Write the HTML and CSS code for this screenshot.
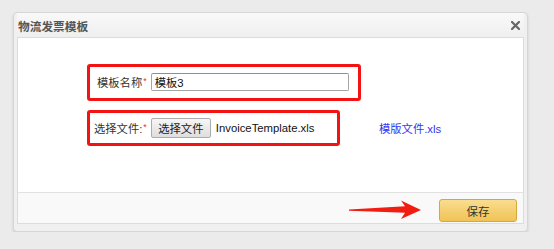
FILE: index.html
```html
<!DOCTYPE html>
<html lang="zh-CN">
<head>
    <meta charset="UTF-8">
    <title>物流发票模板</title>
    <link rel="stylesheet" href="styles.css">
</head>
<body>
    <div class="dialog">
        <div class="dialog-title">
            <span>物流发票模板</span>
            <svg class="close" width="9" height="9" viewBox="0 0 9 9">
                <path d="M1 1 L8 8 M8 1 L1 8" stroke="#666" stroke-width="2.2" stroke-linecap="square"/>
            </svg>
        </div>
        <div class="dialog-panel">
            <div class="dialog-body">
                <!-- template name -->
                <div class="row">
                    <div class="mark mark-name">
                        <label class="field-label">模板名称<em>*</em></label>
                        <input class="text-input" type="text" value="模板3">
                    </div>
                </div>

                <!-- template file -->
                <div class="row row-file">
                    <div class="mark mark-file">
                        <label class="field-label">选择文件:<em>*</em></label>
                        <span class="file-btn">选择文件</span>
                        <span class="file-name">InvoiceTemplate.xls</span>
                    </div>
                    <a class="sample-link" href="#">模版文件.xls</a>
                </div>
            </div>
            <div class="dialog-footer">
                <svg class="arrow" width="74" height="20" viewBox="0 0 74 20">
                    <polygon points="0,9.5 56,6.3 52,0.5 72,10 52,19 56,12.8 0,10.8" fill="#f21d12"/>
                </svg>
                <button class="save-btn" type="button">保存</button>
            </div>
        </div>
    </div>
</body>
</html>
```

FILE: styles.css
```css
body {
    margin: 0;
    padding: 12px 0 0 13px;
    background-color: #ebebeb;
    font-family: "Liberation Sans", "Noto Sans CJK SC", sans-serif;
    font-size: 11.3px;
    color: #222;
}

.dialog {
    box-sizing: border-box;
    width: 515px;
    padding: 0 3px 7px 3px;
    background-color: #f0f0f0;
    border: 1px solid #d6d6d6;
    border-radius: 4px;
    box-shadow: 0 2px 3px rgba(0, 0, 0, 0.12);
}

.dialog-title {
    display: flex;
    justify-content: space-between;
    align-items: center;
    height: 24px;
    padding: 0 4px 0 1px;
    background: linear-gradient(#f9f9f9, #efefef);
    font-size: 11.7px;
    font-weight: bold;
    color: #555;
}

.dialog-panel {
    border: 1px solid #dcdcdc;
    background-color: #fff;
}

.dialog-body {
    height: 154px;
    padding-top: 26px;
    box-sizing: border-box;
}

.row {
    display: flex;
    align-items: center;
    padding-left: 69px;
}

.row-file {
    margin-top: 9px;
}

.mark {
    display: flex;
    align-items: center;
    box-sizing: border-box;
    border: 3px solid #f41313;
    border-radius: 3px;
}

.mark-name {
    width: 274px;
    height: 37px;
    padding: 0 0 1px 7px;
}

.mark-file {
    width: 253px;
    height: 36px;
    padding: 0 0 1px 4px;
}

.field-label {
    color: #333;
}

.field-label em {
    font-style: normal;
    color: #f03030;
    font-size: 9px;
    vertical-align: 3px;
    margin-left: 1px;
}

.mark-name .field-label {
    margin-right: 4px;
}

.text-input {
    box-sizing: border-box;
    width: 198px;
    height: 18px;
    margin: 0;
    padding: 0 3px;
    border: 1px solid #a5a5a5;
    border-top-color: #8f8f8f;
    border-radius: 2px;
    font-family: inherit;
    font-size: 11.3px;
    color: #111;
}

.file-btn {
    box-sizing: border-box;
    display: flex;
    align-items: center;
    justify-content: center;
    width: 60px;
    height: 20px;
    margin-left: 4px;
    border: 1px solid #adadad;
    border-radius: 2px;
    background: linear-gradient(#f6f6f6, #dedede);
    color: #222;
}

.file-name {
    margin-left: 5px;
    color: #111;
}

.sample-link {
    margin-left: 39px;
    color: #3434f0;
    text-decoration: none;
}

.dialog-footer {
    position: relative;
    display: flex;
    justify-content: flex-end;
    height: 31px;
    padding: 6px 6px 0 0;
    box-sizing: border-box;
    border-top: 1px solid #e2e2e2;
    background-color: #f9f9f9;
}

.arrow {
    position: absolute;
    left: 331px;
    top: 7px;
}

.save-btn {
    width: 78px;
    height: 23px;
    border: 1px solid #d3a93f;
    border-radius: 3px;
    background: linear-gradient(#f9dd90, #f0c355);
    font-family: inherit;
    font-size: 11.5px;
    color: #333;
    cursor: pointer;
}
```
